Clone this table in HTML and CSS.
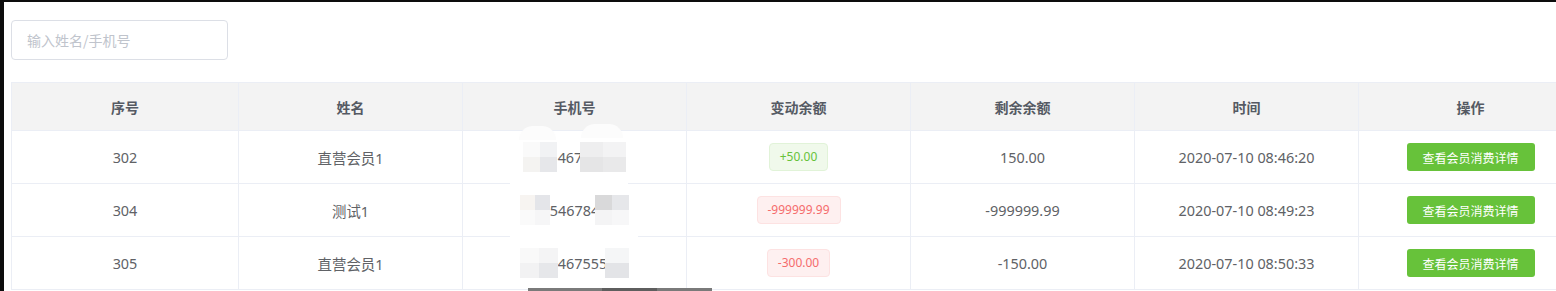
FILE: index.html
```html
<!DOCTYPE html>
<html lang="zh">
<head>
<meta charset="utf-8">
<title>会员余额变动</title>
<link rel="stylesheet" href="styles.css">
</head>
<body>
<div class="app">
  <div class="toolbar">
    <div class="search"><input type="text" placeholder="输入姓名/手机号"></div>
  </div>
  <div class="table-wrap">
    <table class="grid">
      <colgroup>
        <col class="c-first"><col class="c"><col class="c"><col class="c"><col class="c"><col class="c"><col class="c">
      </colgroup>
      <thead>
        <tr><th>序号</th><th>姓名</th><th>手机号</th><th>变动余额</th><th>剩余余额</th><th>时间</th><th>操作</th></tr>
      </thead>
      <tbody>
        <tr>
          <td>302</td>
          <td>直营会员1</td>
          <td><div class="phone"><span class="mos m-a"></span><span class="num">467</span><span class="mos m-b"></span></div></td>
          <td><span class="tag tag-success">+50.00</span></td>
          <td>150.00</td>
          <td>2020-07-10 08:46:20</td>
          <td><button class="btn">查看会员消费详情</button></td>
        </tr>
        <tr>
          <td>304</td>
          <td>测试1</td>
          <td><div class="phone"><span class="mos m-c"></span><span class="num">546784</span><span class="mos m-d"></span></div></td>
          <td><span class="tag tag-danger">-999999.99</span></td>
          <td>-999999.99</td>
          <td>2020-07-10 08:49:23</td>
          <td><button class="btn">查看会员消费详情</button></td>
        </tr>
        <tr>
          <td>305</td>
          <td>直营会员1</td>
          <td><div class="phone"><span class="mos m-e"></span><span class="num">467555</span><span class="mos m-f"></span></div></td>
          <td><span class="tag tag-danger">-300.00</span></td>
          <td>-150.00</td>
          <td>2020-07-10 08:50:33</td>
          <td><button class="btn">查看会员消费详情</button></td>
        </tr>
      </tbody>
    </table>
    <div class="blot blot-1"></div>
    <div class="blot blot-2"></div>
    <div class="blot blot-3"></div>
    <div class="blot blot-4"></div>
    <div class="scrollbar"></div>
  </div>
</div>
</body>
</html>
```
FILE: styles.css
```css
html, body {
  margin: 0;
  padding: 0;
  background: #0d0d0d;
  overflow: hidden;
  height: 291px;
}
.app {
  margin: 2px 0 0 4px;
  background: #fff;
  height: 289px;
  padding: 18px 0 0 7px;
  box-sizing: border-box;
  font-family: "Noto Sans", "Noto Sans CJK SC", sans-serif;
  color: #606266;
  font-size: 14px;
  overflow: hidden;
}
.toolbar {
  display: flex;
  height: 40px;
  margin-bottom: 22px;
}
.search input {
  width: 217px;
  height: 40px;
  box-sizing: border-box;
  border: 1px solid #dcdfe6;
  border-radius: 4px;
  padding: 0 15px;
  font-family: "Noto Sans CJK SC", sans-serif;
  font-size: 14px;
  color: #606266;
  outline: none;
}
.search input::placeholder {
  color: #c0c4cc;
}
.table-wrap {
  position: relative;
  width: 1571px;
}
.grid {
  width: 1571px;
  table-layout: fixed;
  border-collapse: collapse;
}
.c-first { width: 227px; }
.c { width: 224px; }
.grid th, .grid td {
  border: 1px solid #ebeef5;
  text-align: center;
  padding: 0;
}
.grid th {
  background: #f3f3f3;
  height: 47px;
  font-family: "Noto Sans CJK SC", sans-serif;
  font-weight: 700;
  font-size: 14px;
  color: #555a63;
}
.grid td {
  height: 52px;
  font-size: 14.4px;
}
.phone {
  display: flex;
  justify-content: center;
  align-items: center;
  height: 30px;
}
.num {
  position: relative;
}
.mos {
  display: inline-block;
  width: 34px;
  height: 30px;
  position: relative;
  z-index: 1;
}
.m-a {
  margin-right: 1px;
  background:
    linear-gradient(#fafafa, #fafafa) 0 0 / 17px 15px no-repeat,
    linear-gradient(#f1f2f4, #f1f2f4) 17px 0 / 17px 15px no-repeat,
    linear-gradient(#f4f3f1, #f4f3f1) 0 15px / 17px 15px no-repeat,
    linear-gradient(#e6e7ea, #e6e7ea) 17px 15px / 17px 15px no-repeat;
}
.m-b {
  width: 46px;
  margin-left: -2px;
  background:
    linear-gradient(#eeeeef, #eeeeef) 0 0 / 23px 15px no-repeat,
    linear-gradient(#f3f3f4, #f3f3f4) 23px 0 / 23px 15px no-repeat,
    linear-gradient(#e5e5e6, #e5e5e6) 0 15px / 23px 15px no-repeat,
    linear-gradient(#e9e9ea, #e9e9ea) 23px 15px / 23px 15px no-repeat;
}
.m-c {
  width: 30px;
  margin-right: 0;
  background:
    linear-gradient(#f7f4f1, #f7f4f1) 0 0 / 15px 15px no-repeat,
    linear-gradient(#e4e5e9, #e4e5e9) 15px 0 / 15px 15px no-repeat,
    linear-gradient(#fafafa, #fafafa) 0 15px / 15px 15px no-repeat,
    linear-gradient(#f6f6f7, #f6f6f7) 15px 15px / 15px 15px no-repeat;
}
.m-d {
  width: 34px;
  margin-left: -4px;
  background:
    linear-gradient(#d9d9da, #d9d9da) 0 0 / 17px 15px no-repeat,
    linear-gradient(#e6e7ea, #e6e7ea) 17px 0 / 17px 15px no-repeat,
    linear-gradient(#f4f4f5, #f4f4f5) 0 15px / 17px 15px no-repeat,
    linear-gradient(#f7f7f8, #f7f7f8) 17px 15px / 17px 15px no-repeat;
}
.m-e {
  width: 38px;
  margin-right: 0;
  background:
    linear-gradient(#f9f9f9, #f9f9f9) 0 0 / 19px 15px no-repeat,
    linear-gradient(#f4f4f5, #f4f4f5) 19px 0 / 19px 15px no-repeat,
    linear-gradient(#f2f2f3, #f2f2f3) 0 15px / 19px 15px no-repeat,
    linear-gradient(#e6e7ea, #e6e7ea) 19px 15px / 19px 15px no-repeat;
}
.m-f {
  width: 24px;
  margin-left: -2px;
  background:
    linear-gradient(#f5f6f7, #f5f6f7) 0 0 / 24px 15px no-repeat,
    linear-gradient(#e3e4e7, #e3e4e7) 0 15px / 24px 15px no-repeat;
}
.tag {
  display: inline-block;
  height: 28px;
  line-height: 26px;
  padding: 0 10px;
  box-sizing: border-box;
  border: 1px solid;
  border-radius: 4px;
  font-size: 12px;
  white-space: nowrap;
  vertical-align: middle;
}
.tag-success {
  background: #f0f9eb;
  border-color: #e1f3d8;
  color: #67c23a;
}
.tag-danger {
  background: #fef0f0;
  border-color: #fde2e2;
  color: #f56c6c;
}
.btn {
  display: inline-block;
  height: 28px;
  width: 128px;
  border: 0;
  border-radius: 3px;
  background: #67c23a;
  color: #fff;
  font-family: "Noto Sans CJK SC", sans-serif;
  font-size: 12px;
  padding: 0;
  vertical-align: middle;
}
.blot {
  position: absolute;
  background: #fff;
  z-index: 0;
}
.blot-1 { left: 508px; top: 44px; width: 37px; height: 14px; border-radius: 16px 16px 0 0; background: #fcfcfc; }
.blot-2 { left: 570px; top: 42px; width: 42px; height: 14px; border-radius: 16px 16px 0 0; background: #fcfcfc; }
.blot-3 { left: 499px; top: 96px; width: 118px; height: 8px; }
.blot-4 { left: 499px; top: 149px; width: 128px; height: 8px; }
.scrollbar {
  position: absolute;
  left: 517px;
  top: 206px;
  width: 184px;
  height: 3px;
  background: linear-gradient(to right, #7a7a7a 0, #7a7a7a 40%, #5e5e5e 40%, #5e5e5e 70%, #7a7a7a 70%);
}
```
